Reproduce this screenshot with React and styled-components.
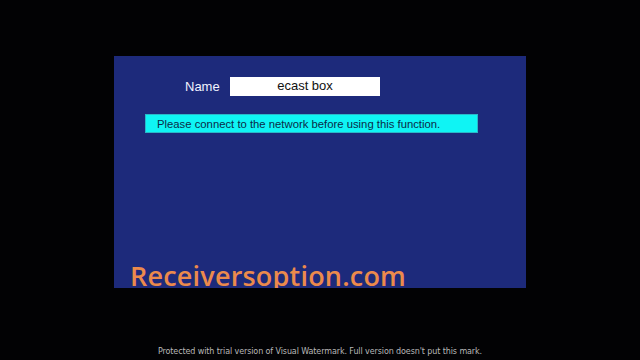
import styled, { createGlobalStyle } from 'styled-components';

const GlobalStyle = createGlobalStyle`
  html, body {
    margin: 0;
    padding: 0;
    background: #000000;
  }
  body {
    font-family: "Liberation Sans", Arial, sans-serif;
  }
`;

const Screen = styled.div`
  width: 640px;
  height: 360px;
  background: #020204;
  display: flex;
  flex-direction: column;
  align-items: flex-start;
  box-sizing: border-box;
  padding: 56px 0 0 114px;
  overflow: hidden;
`;

const Panel = styled.div`
  position: relative;
  width: 412px;
  height: 232px;
  background: #1d2a7b;
  box-sizing: border-box;
  padding: 21px 0 0 31px;
  display: flex;
  flex-direction: column;
  overflow: hidden;
`;

const NameRow = styled.div`
  display: flex;
  align-items: center;
  gap: 10px;
  margin-left: 40px;
`;

const Label = styled.span`
  color: #f2f4ff;
  font-size: 13px;
  width: 35px;
`;

const Field = styled.div`
  width: 150px;
  height: 19px;
  background: #ffffff;
  color: #111111;
  font-size: 13px;
  display: flex;
  align-items: center;
  justify-content: center;
  padding-bottom: 3px;
  box-sizing: border-box;
`;

const Notice = styled.div`
  margin-top: 18px;
  width: 333px;
  height: 19px;
  background: #0ff4f4;
  border: 1px solid #2ab8c8;
  box-sizing: border-box;
  color: #0c2a48;
  font-size: 11.3px;
  display: flex;
  align-items: center;
  padding-left: 11px;
`;

const Watermark = styled.span`
  position: absolute;
  left: 16px;
  top: 206px;
  color: #ec8a4c;
  font-family: "Open Sans", sans-serif;
  font-weight: 600;
  font-size: 27px;
  letter-spacing: 0.2px;
  line-height: 1;
`;

const Footer = styled.div`
  width: 640px;
  margin-left: -114px;
  margin-top: 59px;
  text-align: center;
  color: #b8b8b8;
  font-family: "DejaVu Sans", sans-serif;
  font-size: 8px;
  letter-spacing: -0.1px;
`;

export default function App() {
  return (
    <>
      <GlobalStyle />
      <Screen>
        <Panel>
          <NameRow>
            <Label>Name</Label>
            <Field>ecast box</Field>
          </NameRow>
          <Notice>Please connect to the network before using this function.</Notice>
          <Watermark>Receiversoption.com</Watermark>
        </Panel>
        <Footer>Protected with trial version of Visual Watermark. Full version doesn't put this mark.</Footer>
      </Screen>
    </>
  );
}
